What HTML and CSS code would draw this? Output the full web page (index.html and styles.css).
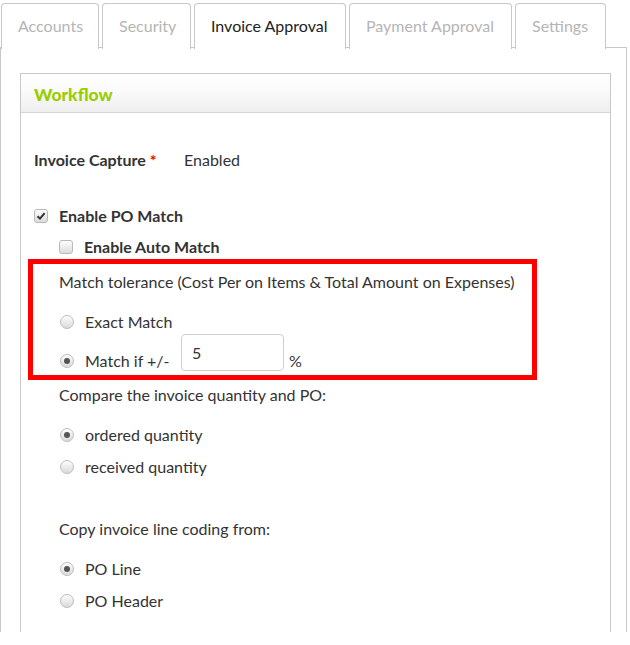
FILE: index.html
```html
<!DOCTYPE html>
<html>
<head>
<meta charset="utf-8">
<link rel="stylesheet" href="styles.css">
</head>
<body>
<div class="tabs">
  <div class="tab">Accounts</div>
  <div class="tab">Security</div>
  <div class="tab active">Invoice Approval</div>
  <div class="tab">Payment Approval</div>
  <div class="tab">Settings</div>
</div>
<div class="panel">
  <div class="box">
    <div class="box-head">Workflow</div>
    <div class="box-body">
      <div class="row r-capture">
        <span class="bold label-capture">Invoice Capture <span class="req">*</span></span>
        <span>Enabled</span>
      </div>
      <div class="row r-po">
        <span class="check checked"><svg viewBox="0 0 14 14" width="14" height="14"><path d="M3.5 7.2 L6 9.6 L10.6 4.2" fill="none" stroke="#333" stroke-width="2"/></svg></span>
        <span class="bold">Enable PO Match</span>
      </div>
      <div class="row r-auto indent">
        <span class="check"></span>
        <span class="bold">Enable Auto Match</span>
      </div>
      <div class="tolerance">
        <div class="redbox"></div>
        <div class="row r-tol indent">Match tolerance (Cost Per on Items &amp; Total Amount on Expenses)</div>
        <div class="row r-exact indent">
          <span class="radio"></span>
          <span>Exact Match</span>
        </div>
        <div class="row r-matchif indent">
          <span class="radio checked"></span>
          <span class="matchif-label">Match if +/-</span>
          <div class="num-input">5</div>
          <span class="pct">%</span>
        </div>
      </div>
      <div class="row r-compare indent">Compare the invoice quantity and PO:</div>
      <div class="row r-ordered indent">
        <span class="radio checked"></span>
        <span>ordered quantity</span>
      </div>
      <div class="row r-received indent">
        <span class="radio"></span>
        <span>received quantity</span>
      </div>
      <div class="row r-copy indent">Copy invoice line coding from:</div>
      <div class="row r-line indent">
        <span class="radio checked"></span>
        <span>PO Line</span>
      </div>
      <div class="row r-header indent">
        <span class="radio"></span>
        <span>PO Header</span>
      </div>
    </div>
  </div>
</div>
</body>
</html>
```
FILE: styles.css
```css
* { box-sizing: border-box; }
html, body { margin: 0; padding: 0; background: #fff; }
body {
  font-family: Lato, "Open Sans", Arial, sans-serif;
  font-size: 16px;
  color: #333;
  width: 630px;
  height: 645px;
  overflow: hidden;
}
.tabs {
  display: flex;
  gap: 3px;
  padding: 3px 0 0 1px;
  height: 48px;
}
.tab {
  height: 46px;
  padding: 0 16px;
  border: 1px solid #c8c8c8;
  border-bottom: none;
  border-radius: 4px 4px 0 0;
  color: #b5b5b5;
  line-height: 44px;
  background: #fff;
  white-space: nowrap;
}
.tab:nth-child(1) { width: 98px; }
.tab:nth-child(2) { width: 89px; }
.tab:nth-child(3) { width: 152px; }
.tab:nth-child(4) { width: 163px; }
.tab:nth-child(5) { width: 91px; }
.tab.active {
  color: #222;
  position: relative;
  z-index: 2;
  height: 46px;
}
.panel {
  width: 627px;
  height: 585px;
  border: 1px solid #c8c8c8;
  border-bottom: none;
  margin-top: -1px;
  padding: 25px 16px 0 19px;
}
.box {
  width: 591px;
  height: 559px;
  border: 1px solid #c8c8c8;
  border-bottom: none;
}
.box-head {
  height: 39px;
  border-bottom: 1px solid #d6d6d6;
  background: linear-gradient(#ffffff 0%, #fbfbfb 40%, #eeeeee 100%);
  color: #9acd00;
  font-weight: 900;
  font-size: 17.5px;
  line-height: 41px;
  padding-left: 13px;
}
.box-body {
  padding-left: 13px;
}
.row {
  display: flex;
  align-items: center;
  height: 20px;
  line-height: 20px;
  white-space: nowrap;
}
.indent { padding-left: 25px; }
.bold { font-weight: 700; }
.req { color: #e00; }
.label-capture { width: 150px; }
.r-capture { margin-top: 37px; }
.r-po { margin-top: 36px; }
.r-auto { margin-top: 11px; }
.tolerance { position: relative; margin-top: 15px; }
.r-exact { margin-top: 20px; }
.r-matchif { margin-top: 2px; height: 37px; align-items: flex-end; }
.r-matchif > span { height: 20px; display: inline-flex; align-items: center; }
.r-matchif .radio { margin-bottom: 3px; height: 14px; }
.r-compare { margin-top: 14px; }
.r-ordered { margin-top: 20px; }
.r-received { margin-top: 12px; }
.r-copy { margin-top: 42px; }
.r-line { margin-top: 20px; }
.r-header { margin-top: 12px; }
.check {
  width: 14px;
  height: 14px;
  border: 1px solid #b9b9b9;
  border-radius: 3px;
  background: linear-gradient(#fdfdfd, #dcdcdc);
  margin-right: 11px;
  flex: none;
  display: inline-flex;
}
.check svg { margin: -1px; }
.radio {
  width: 14px;
  height: 14px;
  border: 1px solid #bdbdbd;
  border-radius: 50%;
  background: linear-gradient(#fdfdfd, #dadada);
  margin: 0 11px 0 1px;
  flex: none;
  position: relative;
}
.radio.checked::after {
  content: "";
  position: absolute;
  left: 3px;
  top: 3px;
  width: 6px;
  height: 6px;
  border-radius: 50%;
  background: #555;
}
.matchif-label { width: 96px; }
.num-input {
  width: 103px;
  height: 37px;
  border: 1px solid #d0d0d0;
  border-radius: 4px;
  padding-left: 10px;
  line-height: 35px;
  margin-bottom: 0;
}
.pct { margin-left: 5px; }
.redbox {
  position: absolute;
  left: -6px;
  top: -13px;
  width: 509px;
  height: 121px;
  border: 5px solid #ff0000;
  pointer-events: none;
}
```
